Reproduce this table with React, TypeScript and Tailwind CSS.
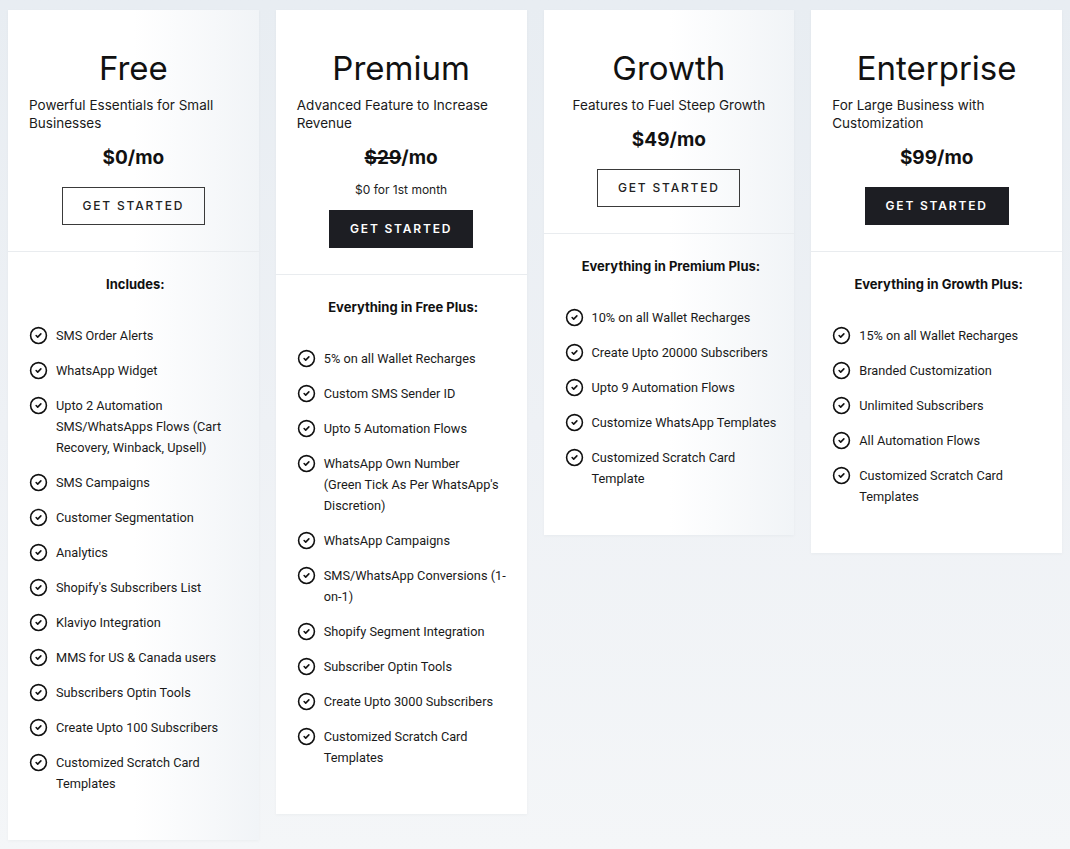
import { CircleCheck } from "lucide-react";

type Plan = {
  name: string;
  tagline: string;
  price: string;
  oldPrice?: string;
  note?: string;
  dark: boolean;
  heading: string;
  features: string[];
  tinted?: boolean;
};

const plans: Plan[] = [
  {
    name: "Free",
    tagline: "Powerful Essentials for Small Businesses",
    price: "$0",
    dark: false,
    tinted: true,
    heading: "Includes:",
    features: [
      "SMS Order Alerts",
      "WhatsApp Widget",
      "Upto 2 Automation SMS/WhatsApps Flows (Cart Recovery, Winback, Upsell)",
      "SMS Campaigns",
      "Customer Segmentation",
      "Analytics",
      "Shopify's Subscribers List",
      "Klaviyo Integration",
      "MMS for US & Canada users",
      "Subscribers Optin Tools",
      "Create Upto 100 Subscribers",
      "Customized Scratch Card Templates",
    ],
  },
  {
    name: "Premium",
    tagline: "Advanced Feature to Increase Revenue",
    price: "",
    oldPrice: "$29",
    note: "$0 for 1st month",
    dark: true,
    heading: "Everything in Free Plus:",
    features: [
      "5% on all Wallet Recharges",
      "Custom SMS Sender ID",
      "Upto 5 Automation Flows",
      "WhatsApp Own Number\n(Green Tick As Per WhatsApp's Discretion)",
      "WhatsApp Campaigns",
      "SMS/WhatsApp Conversions (1-on-1)",
      "Shopify Segment Integration",
      "Subscriber Optin Tools",
      "Create Upto 3000 Subscribers",
      "Customized Scratch Card Templates",
    ],
  },
  {
    name: "Growth",
    tagline: "Features to Fuel Steep Growth",
    price: "$49",
    dark: false,
    tinted: true,
    heading: "Everything in Premium Plus:",
    features: [
      "10% on all Wallet Recharges",
      "Create Upto 20000 Subscribers",
      "Upto 9 Automation Flows",
      "Customize WhatsApp Templates",
      "Customized Scratch Card Template",
    ],
  },
  {
    name: "Enterprise",
    tagline: "For Large Business with Customization",
    price: "$99",
    dark: true,
    heading: "Everything in Growth Plus:",
    features: [
      "15% on all Wallet Recharges",
      "Branded Customization",
      "Unlimited Subscribers",
      "All Automation Flows",
      "Customized Scratch Card Templates",
    ],
  },
];

function PlanCard({ plan }: { plan: Plan }) {
  return (
    <div
      className={
        plan.tinted
          ? "flex flex-col bg-gradient-to-r from-white via-white to-[#f1f4f7] shadow-[0_1px_3px_rgba(30,40,60,0.04)]"
          : "flex flex-col bg-white shadow-[0_1px_3px_rgba(30,40,60,0.04)]"
      }
    >
      <div className="border-b border-[#e9ecef] px-[21px] pt-[38px] pb-[26px] text-center">
        <h2 className="text-[33px] leading-[40px] font-normal text-[#111]">{plan.name}</h2>
        <p className="mt-[8px] inline-block text-left text-[13.5px] leading-[18px] text-[#1a1a1a]">
          {plan.tagline}
        </p>
        <div className="mt-[11px] text-[19px] leading-[26px] font-bold text-[#111]">
          {plan.oldPrice && <span className="line-through decoration-2">{plan.oldPrice}</span>}
          {plan.price}/mo
        </div>
        {plan.note && (
          <div className="mt-[10px] text-[12px] leading-[18px] text-[#222]">{plan.note}</div>
        )}
        <button
          type="button"
          className={
            plan.dark
              ? `${plan.note ? "mt-[11px]" : "mt-[16px]"} h-[38px] w-[144px] bg-[#1d1e23] text-[12px] font-semibold tracking-[1.8px] text-white`
              : "mt-[16px] h-[38px] w-[143px] border-[1.5px] border-[#3a3a3a] bg-transparent text-[12px] font-medium tracking-[1.8px] text-[#222]"
          }
        >
          GET STARTED
        </button>
      </div>
      <div className="pl-[21px] pr-[17px] pt-[22px] pb-[46px]">
        <h3 className="text-center text-[13px] leading-[20px] font-bold text-[#111]">
          {plan.heading}
        </h3>
        <ul
          className="mt-[31px] flex flex-col gap-[14px]"
          style={{ fontFamily: "Roboto, 'Noto Sans', sans-serif" }}
        >
          {plan.features.map((f) => (
            <li
              key={f}
              className="flex gap-[8px] text-[12.75px] leading-[21px] text-[#1a1a1a]"
            >
              <CircleCheck size={19} strokeWidth={2} className="mt-[1px] shrink-0 text-[#111]" />
              <span className="whitespace-pre-line">{f}</span>
            </li>
          ))}
        </ul>
      </div>
    </div>
  );
}

export default function App() {
  return (
    <div
      className="min-h-[849px] bg-gradient-to-b from-[#e8edf2] via-[#eef1f5] to-[#f4f6f8] px-[8px] pt-[10px]"
      style={{ fontFamily: "Inter, 'Noto Sans', sans-serif" }}
    >
      <div className="grid grid-cols-4 items-start gap-[17px]">
        {plans.map((p) => (
          <PlanCard key={p.name} plan={p} />
        ))}
      </div>
    </div>
  );
}
